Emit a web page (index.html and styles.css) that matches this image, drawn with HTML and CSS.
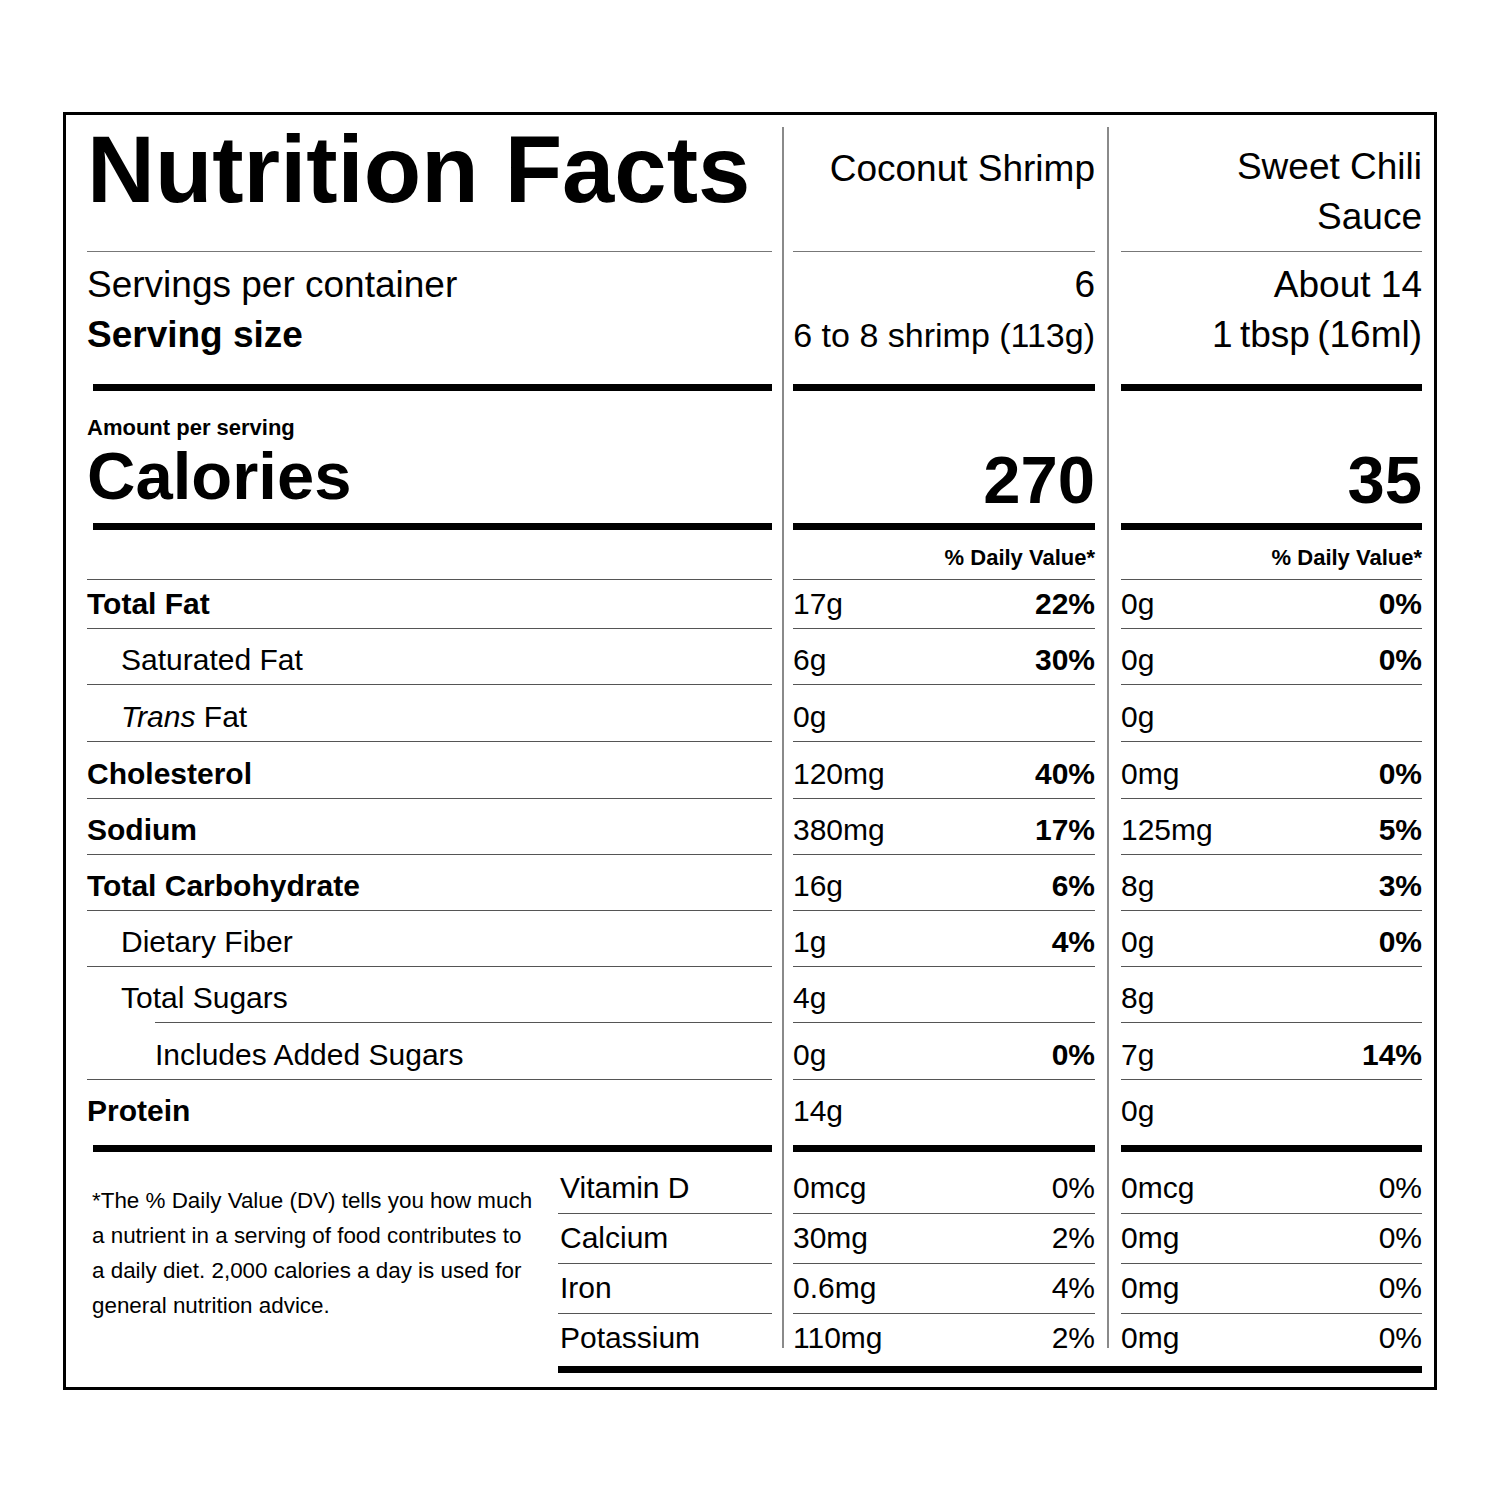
FILE: index.html
```html
<!DOCTYPE html>
<html lang="en">
<head>
<meta charset="utf-8">
<title>Nutrition Facts</title>
<link rel="stylesheet" href="styles.css">
</head>
<body>
<div class="page">
  <div class="label">
    <div class="grid">
      <div class="divider d1"></div>
      <div class="divider d2"></div>

      <div class="c1 head title">Nutrition Facts</div>
      <div class="c2 head prod">Coconut Shrimp</div>
      <div class="c3 head prod prod3">Sweet Chili<br>Sauce</div>

      <div class="c1 serv">Servings per container<br><b>Serving size</b></div>
      <div class="c2 serv num">6<br><span class="tight">6 to 8 shrimp (113g)</span></div>
      <div class="c3 serv num">About 14<br><span class="tbsp">1 tbsp (16ml)</span></div>

      <div class="c1 bar"></div>
      <div class="c2 bar"></div>
      <div class="c3 bar"></div>

      <div class="c1 cal-l"><div class="amt">Amount per serving</div><div class="cal">Calories</div></div>
      <div class="c2 cal-n">270</div>
      <div class="c3 cal-n">35</div>

      <div class="c1 bar"></div>
      <div class="c2 bar"></div>
      <div class="c3 bar"></div>

      <div class="c1 line"></div>
      <div class="c2 dv">% Daily Value*</div>
      <div class="c3 dv">% Daily Value*</div>

      <div class="c1 row"><b>Total Fat</b></div>
      <div class="c2 row"><span>17g</span><b>22%</b></div>
      <div class="c3 row"><span>0g</span><b>0%</b></div>

      <div class="c1 row ind1"><span>Saturated Fat</span></div>
      <div class="c2 row"><span>6g</span><b>30%</b></div>
      <div class="c3 row"><span>0g</span><b>0%</b></div>

      <div class="c1 row ind1"><span><i>Trans</i> Fat</span></div>
      <div class="c2 row"><span>0g</span></div>
      <div class="c3 row"><span>0g</span></div>

      <div class="c1 row"><b>Cholesterol</b></div>
      <div class="c2 row"><span>120mg</span><b>40%</b></div>
      <div class="c3 row"><span>0mg</span><b>0%</b></div>

      <div class="c1 row"><b>Sodium</b></div>
      <div class="c2 row"><span>380mg</span><b>17%</b></div>
      <div class="c3 row"><span>125mg</span><b>5%</b></div>

      <div class="c1 row"><b>Total Carbohydrate</b></div>
      <div class="c2 row"><span>16g</span><b>6%</b></div>
      <div class="c3 row"><span>8g</span><b>3%</b></div>

      <div class="c1 row ind1"><span>Dietary Fiber</span></div>
      <div class="c2 row"><span>1g</span><b>4%</b></div>
      <div class="c3 row"><span>0g</span><b>0%</b></div>

      <div class="c1 row ind1 sugars"><span>Total Sugars</span></div>
      <div class="c2 row"><span>4g</span></div>
      <div class="c3 row"><span>8g</span></div>

      <div class="c1 row ind2"><span>Includes Added Sugars</span></div>
      <div class="c2 row"><span>0g</span><b>0%</b></div>
      <div class="c3 row"><span>7g</span><b>14%</b></div>

      <div class="c1 row protein"><b>Protein</b></div>
      <div class="c2 row protein"><span>14g</span></div>
      <div class="c3 row protein"><span>0g</span></div>

      <div class="c1 bar"></div>
      <div class="c2 bar"></div>
      <div class="c3 bar"></div>

      <div class="foot">*The % Daily Value (DV) tells you how much a nutrient in a serving of food contributes to a daily diet. 2,000 calories a day is used for general nutrition advice.</div>

      <div class="vn vit"><span>Vitamin D</span></div>
      <div class="c2 vit"><span>0mcg</span><span>0%</span></div>
      <div class="c3 vit"><span>0mcg</span><span>0%</span></div>

      <div class="vn vit"><span>Calcium</span></div>
      <div class="c2 vit"><span>30mg</span><span>2%</span></div>
      <div class="c3 vit"><span>0mg</span><span>0%</span></div>

      <div class="vn vit"><span>Iron</span></div>
      <div class="c2 vit"><span>0.6mg</span><span>4%</span></div>
      <div class="c3 vit"><span>0mg</span><span>0%</span></div>

      <div class="vn vit last"><span>Potassium</span></div>
      <div class="c2 vit last"><span>110mg</span><span>2%</span></div>
      <div class="c3 vit last"><span>0mg</span><span>0%</span></div>

      <div class="bbar"></div>
    </div>
  </div>
</div>
</body>
</html>
```

FILE: styles.css
```css
html, body {
  margin: 0;
  padding: 0;
  background: #fff;
}

body {
  font-family: "Liberation Sans", Arial, Helvetica, sans-serif;
  color: #000;
}

.page {
  padding: 112px 0 0 63px;
}

.label {
  box-sizing: border-box;
  width: 1374px;
  height: 1278px;
  border: 3px solid #000;
  padding: 12px 12px 14px 21px;
}

.grid {
  display: grid;
  grid-template-columns: 471px 214px 21px 302px 26px 301px;
  grid-template-rows:
    125px 132px 7px 132px 7px 50px
    49px 56px 57px 57px 56px 56px 56px 56px 57px 65px
    7px 62px 50px 50px 42px 10px 7px;
}

.grid > div {
  box-sizing: border-box;
  min-width: 0;
}

.divider {
  grid-row: 1 / 22;
  width: 2px;
  justify-self: center;
  background: #8a8a8a;
  margin-bottom: 8px;
}

.d1 { grid-column: 3; }
.d2 { grid-column: 5; }

.c1 { grid-column: 1 / 3; }
.c2 { grid-column: 4; }
.c3 { grid-column: 6; }
.vn { grid-column: 2; padding-left: 2px; }

/* header */
.head {
  border-bottom: 1px solid #777;
}

.title {
  font-size: 94px;
  font-weight: bold;
  line-height: 80px;
  padding-top: 3px;
  white-space: nowrap;
}

.prod {
  font-size: 37px;
  line-height: 50px;
  text-align: right;
  padding-top: 17px;
}

.prod3 {
  padding-top: 15px;
}

/* servings */
.serv {
  font-size: 37px;
  line-height: 50px;
  padding-top: 8px;
}

.serv.num {
  text-align: right;
  white-space: nowrap;
}

.tight {
  font-size: 34px;
}

.tbsp {
  word-spacing: -3px;
}

/* thick rules */
.bar {
  background: #000;
}

.bar.c1 {
  margin-left: 6px;
}

/* calories */
.cal-l {
  padding-top: 24px;
}

.amt {
  font-size: 22px;
  font-weight: bold;
  line-height: 26px;
}

.cal {
  font-size: 67px;
  font-weight: bold;
  line-height: 70px;
}

.cal-n {
  display: flex;
  align-items: flex-end;
  justify-content: flex-end;
  font-size: 67px;
  font-weight: bold;
  line-height: 70px;
  padding-bottom: 8px;
}

/* daily value header */
.line {
  border-bottom: 1px solid #555;
}

.dv {
  display: flex;
  align-items: flex-end;
  justify-content: flex-end;
  font-size: 22px;
  font-weight: bold;
  line-height: 26px;
  padding-bottom: 8px;
  border-bottom: 1px solid #555;
}

/* nutrient rows */
.row {
  display: flex;
  align-items: flex-end;
  justify-content: space-between;
  font-size: 30px;
  line-height: 36px;
  padding-bottom: 6px;
  border-bottom: 1px solid #555;
  white-space: nowrap;
}

.ind1 { padding-left: 34px; }
.ind2 { padding-left: 68px; }

.sugars {
  border-bottom: 0;
  padding-bottom: 7px;
  background: linear-gradient(#555, #555) no-repeat right bottom / calc(100% - 68px) 1px;
}

.protein {
  border-bottom: 0;
  padding-bottom: 16px;
}

/* footnote */
.foot {
  grid-column: 1;
  grid-row: 18 / 22;
  font-size: 22.4px;
  line-height: 35px;
  padding: 31px 18px 0 5px;
}

/* vitamins */
.vit {
  display: flex;
  align-items: flex-end;
  justify-content: space-between;
  font-size: 30px;
  line-height: 36px;
  padding-bottom: 7px;
  border-bottom: 1px solid #555;
  white-space: nowrap;
}

.vit.last {
  border-bottom: 0;
  padding-bottom: 0;
}

.bbar {
  grid-column: 2 / 7;
  grid-row: 23;
  background: #000;
}
```
